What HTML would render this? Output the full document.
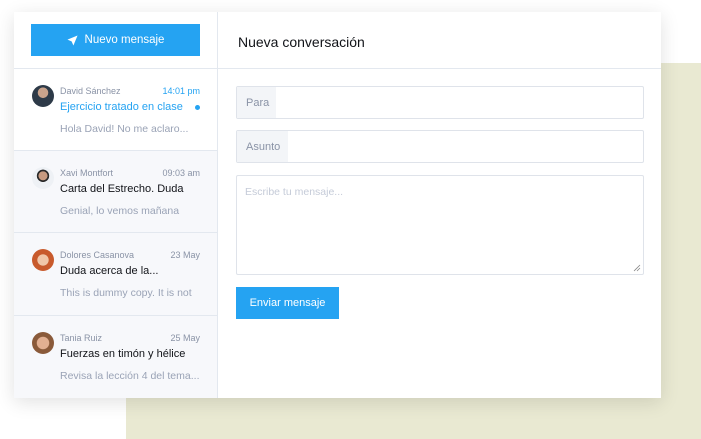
<!DOCTYPE html>
<html><head><meta charset="utf-8"><style>
*{margin:0;padding:0;box-sizing:border-box}
body{width:701px;height:439px;background:#fff;position:relative;overflow:hidden;font-family:"Liberation Sans","DejaVu Sans",sans-serif}
.green{position:absolute;left:126px;top:63px;right:0;bottom:0;background:#e9e9d2}
.card{position:absolute;left:14px;top:12px;width:647px;height:386px;background:#fff;box-shadow:0 4px 18px rgba(0,0,0,.12)}
.left{position:absolute;left:0;top:0;width:204px;height:386px;border-right:1px solid #e3e8ef}
.btn{position:absolute;left:17px;top:12px;width:169px;height:32px;background:#25a3f2;color:#fff;font-size:11.5px;display:flex;align-items:center;justify-content:center;gap:7px}
.hdiv{position:absolute;left:0;right:0;top:56px;border-top:1px solid #e3e8ef}
.item{position:absolute;left:0;width:203px;height:82px;border-bottom:1px solid #e3e8ef;background:#f7f8fb}
.av{position:absolute;left:18px;top:16px;width:22px;height:22px;border-radius:50%}
.nm{position:absolute;left:46px;top:17px;font-size:9px;color:#8a93a6}
.tm{position:absolute;right:17px;top:17px;font-size:9px;color:#8a93a6}
.sb{position:absolute;left:46px;top:32px;font-size:11px;color:#111318}
.pv{position:absolute;left:46px;top:54px;font-size:10.5px;color:#9aa3b6}
.right{position:absolute;left:204px;top:0;right:0;height:386px}
.title{position:absolute;left:20px;top:22px;font-size:14px;color:#111318}
.rdiv{position:absolute;left:0;right:0;top:56px;border-top:1px solid #e3e8ef}
.inp{position:absolute;left:18px;width:408px;border:1px solid #dfe3ea;border-radius:2px;background:#fff}
.lab{position:absolute;left:0;top:0;bottom:0;background:#f3f5f8;color:#8a93a6;font-size:11px;padding-left:9px;display:flex;align-items:center}
.send{position:absolute;left:18px;top:275px;width:103px;height:32px;background:#25a3f2;color:#fff;font-size:11px;display:flex;align-items:center;justify-content:center}
</style></head><body>
<div class="green"></div>
<div class="card">
 <div class="left">
  <div class="btn"><svg width="11" height="11" viewBox="0 0 12 12"><path d="M11.5 0.5 L0.5 5 L5 7 L7 11.5 Z" fill="#fff"/></svg>Nuevo mensaje</div>
  <div class="hdiv"></div>
  <div class="item" style="top:57px;background:#fff;height:82px">
   <div class="av" style="background:radial-gradient(circle at 50% 35%,#c9a38c 0 28%,#2d3a48 30%)"></div>
   <div class="nm">David Sánchez</div><div class="tm" style="color:#25a3f2">14:01 pm</div>
   <div class="sb" style="color:#25a3f2">Ejercicio tratado en clase</div>
   <div style="position:absolute;right:17px;top:36px;width:5px;height:5px;border-radius:50%;background:#25a3f2"></div>
   <div class="pv">Hola David! No me aclaro...</div>
  </div>
  <div class="item" style="top:139px">
   <div class="av" style="background:radial-gradient(circle at 50% 40%,#c79a80 0 25%,#2a2a2a 27% 35%,#eef1f5 37%)"></div>
   <div class="nm">Xavi Montfort</div><div class="tm">09:03 am</div>
   <div class="sb">Carta del Estrecho. Duda</div>
   <div class="pv">Genial, lo vemos mañana</div>
  </div>
  <div class="item" style="top:221px;height:83px">
   <div class="av" style="background:radial-gradient(circle at 50% 50%,#f0c6a8 0 35%,#c85a2c 38%)"></div>
   <div class="nm">Dolores Casanova</div><div class="tm">23 May</div>
   <div class="sb">Duda acerca de la...</div>
   <div class="pv">This is dummy copy. It is not</div>
  </div>
  <div class="item" style="top:304px;height:82px;border-bottom:none">
   <div class="av" style="background:radial-gradient(circle at 50% 50%,#e2b092 0 38%,#8a5a3a 42%)"></div>
   <div class="nm">Tania Ruiz</div><div class="tm">25 May</div>
   <div class="sb">Fuerzas en timón y hélice</div>
   <div class="pv">Revisa la lección 4 del tema...</div>
  </div>
 </div>
 <div class="right">
  <div class="title">Nueva conversación</div>
  <div class="rdiv"></div>
  <div class="inp" style="top:74px;height:33px"><div class="lab" style="width:39px">Para</div></div>
  <div class="inp" style="top:118px;height:33px"><div class="lab" style="width:51px">Asunto</div></div>
  <div class="inp" style="top:163px;height:100px"><div style="position:absolute;left:8px;top:10px;font-size:10.5px;color:#c5cbd8">Escribe tu mensaje...</div>
   <svg style="position:absolute;right:2px;bottom:2px" width="8" height="8"><path d="M1 7L7 1M4 7L7 4" stroke="#888" stroke-width="0.8"/></svg></div>
  <div class="send">Enviar mensaje</div>
 </div>
</div>
</body></html>
